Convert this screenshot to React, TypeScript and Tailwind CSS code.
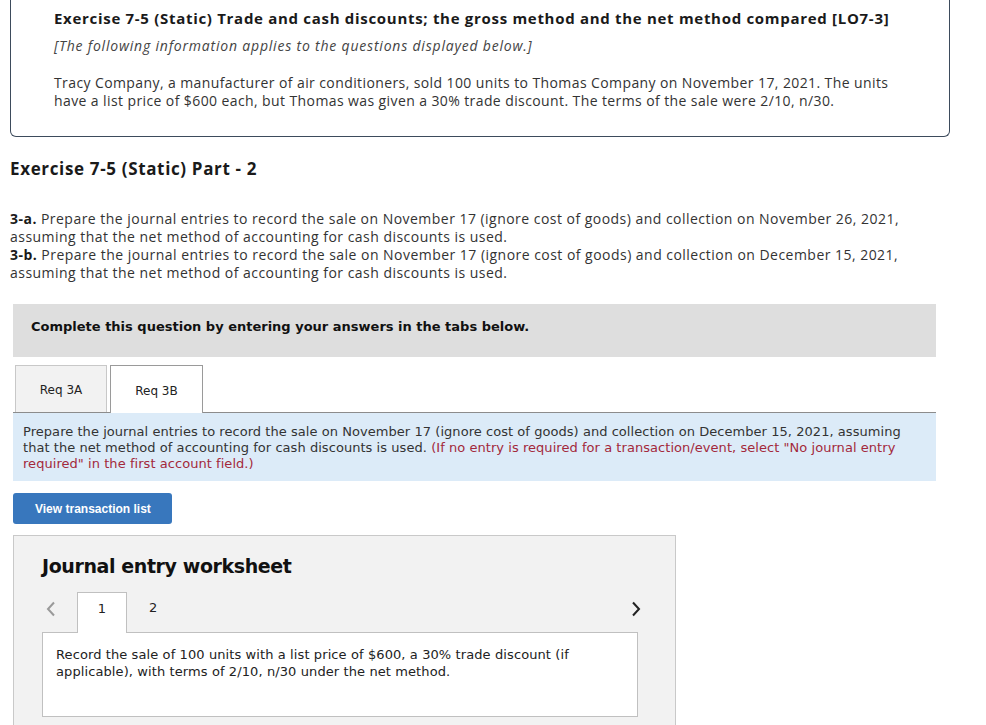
const head = { fontFamily: '"Open Sans", "Liberation Sans", sans-serif' };
const verd = { fontFamily: '"DejaVu Sans", Verdana, sans-serif' };

export default function App() {
  return (
    <div className="h-[725px] w-[986px] overflow-hidden bg-white text-[#222]">
      {/* intro box, top edge is scrolled off */}
      <div
        className="ml-[10px] w-[940px] rounded-b-[6px] border-x border-b border-[#3d4b5c] pb-[26px] pl-[43px] pt-[8px]"
        style={head}
      >
        <div className="text-[15px] font-bold leading-[20px] tracking-[0.7px] text-[#1a1a1a]">
          Exercise 7-5 (Static) Trade and cash discounts; the gross method and the net method compared [LO7-3]
        </div>
        <div className="mt-[9px] text-[14px] italic leading-[18px] tracking-[0.8px] text-[#444]">
          [The following information applies to the questions displayed below.]
        </div>
        <p className="mt-[19px] whitespace-nowrap text-[14px] leading-[18px] tracking-[0.4px] text-[#333]">
          Tracy Company, a manufacturer of air conditioners, sold 100 units to Thomas Company on November 17, 2021. The units
          <br />
          have a list price of $600 each, but Thomas was given a 30% trade discount. The terms of the sale were 2/10, n/30.
        </p>
      </div>

      <div className="ml-[10px]" style={head}>
        <h2 className="mt-[20px] text-[17px] font-bold leading-[24px] tracking-[0.65px] text-[#1a1a1a]">
          Exercise 7-5 (Static) Part - 2
        </h2>
        <p className="mt-[29px] whitespace-nowrap text-[14px] leading-[18px] tracking-[0.47px] text-[#333]">
          <b className="text-[#1a1a1a]">3-a.</b> Prepare the journal entries to record the sale on November 17 (ignore cost of goods) and collection on November 26, 2021,
          <br />
          assuming that the net method of accounting for cash discounts is used.
          <br />
          <b className="text-[#1a1a1a]">3-b.</b> Prepare the journal entries to record the sale on November 17 (ignore cost of goods) and collection on December 15, 2021,
          <br />
          assuming that the net method of accounting for cash discounts is used.
        </p>
      </div>

      <div className="ml-[13px] w-[923px]" style={verd}>
        <div className="mt-[22px] flex h-[53px] items-center bg-[#dedede] pb-[7px] pl-[18px] text-[13px] font-bold text-[#111]">
          Complete this question by entering your answers in the tabs below.
        </div>

        <div className="mt-[8px] flex items-end gap-[3px] pl-[2px]">
          <div className="flex h-[47px] w-[92px] items-center justify-center border border-b-0 border-[#c8c8c8] bg-[#f2f2f2] pt-[2px] text-[12px] text-[#222]">
            Req 3A
          </div>
          <div className="relative -mb-px flex h-[48px] w-[93px] items-center justify-center border border-b-0 border-[#9a9a9a] bg-white pt-[2px] text-[12px] text-[#222]">
            Req 3B
          </div>
        </div>
        <div className="whitespace-nowrap border-t border-[#8c8c8c] bg-[#dcebf8] px-[10px] pb-[9px] pt-[11px] text-[13px] leading-[16px] tracking-[0.05px] text-[#333]">
          Prepare the journal entries to record the sale on November 17 (ignore cost of goods) and collection on December 15, 2021, assuming
          <br />
          that the net method of accounting for cash discounts is used.{' '}
          <span className="text-[#a3293b]">
            (If no entry is required for a transaction/event, select "No journal entry
            <br />
            required" in the first account field.)
          </span>
        </div>

        <button
          type="button"
          className="mt-[12px] flex h-[31px] w-[159px] items-center rounded-[3px] bg-[#3877bd] pl-[22px] text-[12px] font-bold text-white"
          style={{ fontFamily: '"Liberation Sans", Arial, sans-serif' }}
        >
          View transaction list
        </button>

        <div className="mt-[11px] h-[200px] w-[663px] border border-[#c9c9c9] bg-[#f2f2f2] px-[28px] pt-[18px]">
          <h3 className="text-[19px] font-bold leading-[24px] tracking-[-0.4px] text-[#111]">Journal entry worksheet</h3>
          <div className="mt-[14px] flex h-[40px] items-center">
            <svg width="10" height="16" viewBox="0 0 10 16" className="ml-[4px] -mt-[6px]">
              <path d="M8 1.5 L2 8 L8 14.5" fill="none" stroke="#9a9a9a" strokeWidth="2" />
            </svg>
            <div className="relative -mb-px ml-[21px] flex h-[41px] w-[50px] items-center justify-center self-start border border-b-0 border-[#c0c0c0] bg-white pb-[8px] text-[13px] text-[#222]">
              1
            </div>
            <div className="-mt-[8px] ml-[22px] text-[13px] text-[#222]">2</div>
            <div className="flex-1" />
            <svg width="10" height="16" viewBox="0 0 10 16" className="-mt-[6px] mr-[6px]">
              <path d="M2 1.5 L8 8 L2 14.5" fill="none" stroke="#222" strokeWidth="2" />
            </svg>
          </div>
          <div className="h-[85px] w-[596px] border border-[#c0c0c0] bg-white px-[13px] pt-[13px] text-[13px] leading-[17px] tracking-[0.1px] text-[#222]">
            Record the sale of 100 units with a list price of $600, a 30% trade discount (if
            <br />
            applicable), with terms of 2/10, n/30 under the net method.
          </div>
        </div>
      </div>
    </div>
  );
}
